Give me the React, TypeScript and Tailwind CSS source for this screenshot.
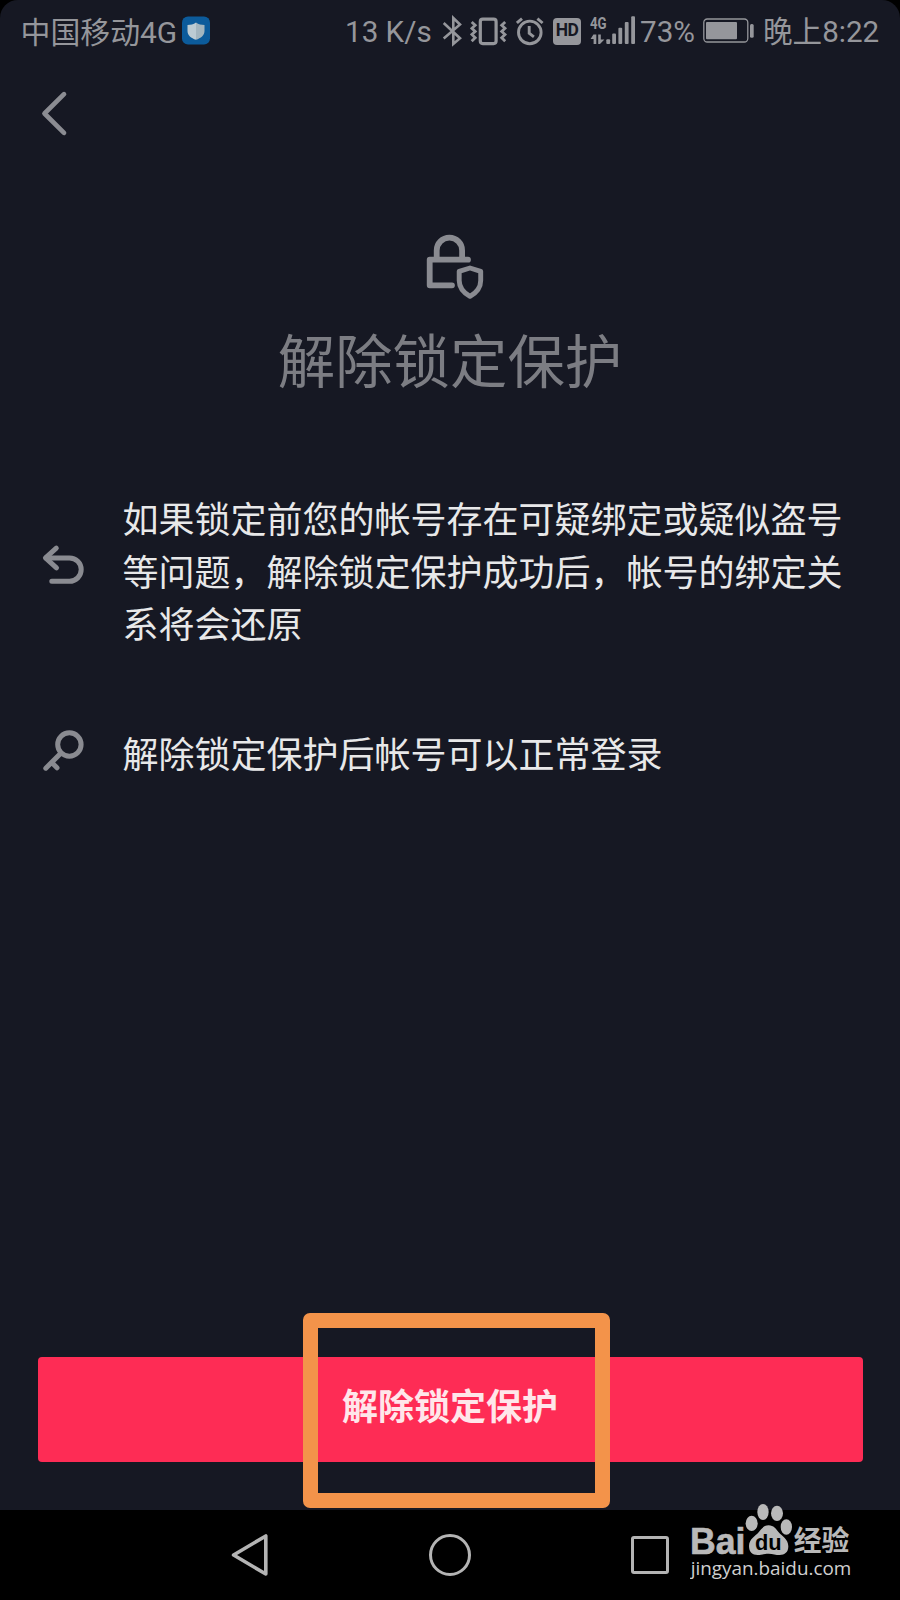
import React from 'react';

const tips = [
  {
    icon: UndoIcon,
    text: '如果锁定前您的帐号存在可疑绑定或疑似盗号等问题，解除锁定保护成功后，帐号的绑定关系将会还原',
  },
  { icon: KeyIcon, text: '解除锁定保护后帐号可以正常登录' },
];

function BackIcon() {
  return (
    <svg width="30" height="48" viewBox="0 0 30 48" fill="none" stroke="#8b8c92" strokeWidth="4.7" strokeLinecap="round" strokeLinejoin="round">
      <path d="M24 4.2 4.5 23.5 24 42.8" />
    </svg>
  );
}

function LockIcon() {
  return (
    <svg width="62" height="70" viewBox="0 0 62 70" fill="none" stroke="#8a8b91" strokeWidth="5.8" strokeLinecap="round" strokeLinejoin="round">
      <path d="M12.7 26V18.4a12.7 12.7 0 0 1 25.4 0V26" />
      <path d="M44 27.7H5.7v25.6H28" />
      <path strokeWidth="4.9" d="M46 36 56.7 39.3V48.5C56.7 56.5 52 61 46 64.4 40 61 35.2 56.5 35.2 48.5V39.3Z" />
    </svg>
  );
}

function UndoIcon() {
  return (
    <svg className="shrink-0 -translate-y-[9px]" width="50" height="46" viewBox="0 0 50 46" fill="none" stroke="#8a8b91" strokeWidth="5" strokeLinecap="round" strokeLinejoin="round">
      <path d="M16.3 6.2 5.5 15.9l11 10" />
      <path d="M6 15.9h23.5a11.7 11.7 0 0 1 0 23.4H11.8" />
    </svg>
  );
}

function KeyIcon() {
  return (
    <svg className="shrink-0 -translate-y-[6px]" width="50" height="46" viewBox="0 0 50 46" fill="none" stroke="#8a8b91" strokeWidth="5" strokeLinecap="round">
      <circle cx="29.4" cy="17.5" r="11.7" />
      <path d="M20.8 26.3 5.8 41.2M12 35.8l5 5" />
    </svg>
  );
}

function StatusBar() {
  return (
    <div className="flex h-[62px] shrink-0 items-center pl-[20.5px] text-[29.6px] leading-none whitespace-nowrap text-[#95969b]">
      <span className="w-[161.5px] shrink-0 pt-[3px] text-[29.9px]">中国移动4G</span>
      <svg className="shrink-0" width="28" height="32" viewBox="0 0 28 32">
        <rect y="1.5" width="28" height="28" rx="6" fill="#0c5b9b" />
        <path d="M14 7.5c2.6 1.8 5.3 2.4 8.5 2.6v5.8c0 4.4-3.6 7.2-8.5 8.8Z" fill="#a3b5bf" />
        <path d="M14 7.5c-2.6 1.8-5.3 2.4-8.5 2.6v5.8c0 4.4 3.6 7.2 8.5 8.8Z" fill="#bccbd3" />
      </svg>
      <span className="ml-[135px] w-[97px] shrink-0 pt-[3px]">13 K/s</span>
      {/* bluetooth */}
      <svg className="shrink-0" width="22" height="32" viewBox="0 0 22 32" fill="none" stroke="currentColor" strokeWidth="2.6">
        <path d="M1.7 8 18 23.3 11.3 29V3L18 9.5 1.7 23.5" />
      </svg>
      {/* vibrate */}
      <svg className="ml-[6px] shrink-0" width="38" height="32" viewBox="0 0 38 32" fill="none" stroke="currentColor">
        <rect x="10.3" y="4.2" width="15.8" height="24.4" rx="2.5" strokeWidth="3.2" />
        <path strokeWidth="2.8" d="m1.7 7 3.5 3.3-3.3 3 3.3 3.2-3.3 3 3.3 3.2-3.5 3.5M35.2 7l-3.5 3.3 3.3 3-3.3 3.2 3.3 3-3.3 3.2 3.5 3.5" />
      </svg>
      {/* alarm */}
      <svg className="ml-[8px] shrink-0" width="28" height="32" viewBox="0 0 28 32" fill="none" stroke="currentColor" strokeWidth="2.9">
        <circle cx="13.8" cy="17.4" r="11.3" />
        <path d="M13.2 11v7.2l4.7 3.6M.9 8 6 3.6M26.6 8l-5.2-4.4" />
      </svg>
      <span className="ml-[9px] flex h-[27px] w-[28px] shrink-0 items-center justify-center rounded-[4px] bg-[#95969b] text-[17.5px] font-bold tracking-[-0.5px] text-[#161823]">HD</span>
      <div className="ml-[9px] flex h-[32px] w-[46px] shrink-0">
        <div className="flex w-[16px] flex-col">
          <span className="h-[19px] w-[20px] origin-left scale-x-[0.78] text-[17px] leading-[17px] font-bold">4G</span>
          <svg className="shrink-0" width="15" height="11" viewBox="0 0 15 11" fill="currentColor">
            <path d="M3.4.5h2.9V10H3.6V5H.6ZM8.2.5h2.6v5h3.6L10 10H8.2Z" />
          </svg>
        </div>
        <svg className="shrink-0" width="30" height="32" viewBox="0 0 30 32" fill="currentColor">
          <rect x="0.3" y="24.2" width="3.8" height="4.7" rx="1" />
          <rect x="6.2" y="18.5" width="3.8" height="10.4" rx="1" />
          <rect x="12.4" y="12.7" width="3.8" height="16.2" rx="1" />
          <rect x="18.8" y="7" width="3.8" height="21.9" rx="1" />
          <rect x="25.2" y="1.3" width="3.8" height="27.6" rx="1" />
        </svg>
      </div>
      <span className="ml-[4px] w-[63px] shrink-0 pt-[3px]">73%</span>
      <svg className="shrink-0" width="52" height="32" viewBox="0 0 52 32">
        <rect x="0.8" y="4" width="44" height="23" rx="3.5" fill="none" stroke="currentColor" strokeWidth="1.3" />
        <rect x="3" y="7" width="31" height="17.2" rx="1" fill="currentColor" />
        <rect x="47" y="9" width="3.7" height="13.7" rx="1.5" fill="currentColor" />
      </svg>
      <span className="ml-[8px] shrink-0 pt-[3px]">晚上8:22</span>
    </div>
  );
}

function NavBar() {
  return (
    <div className="flex h-[90px] shrink-0 items-center justify-between bg-black pr-[231px] pl-[230px]">
      <svg width="38" height="46" viewBox="0 0 38 46" fill="none" stroke="#b4b4b4" strokeWidth="3.6" strokeLinejoin="round">
        <path d="M35.8 4v38L3.6 23Z" />
      </svg>
      <div className="size-[42px] rounded-full border-[3.5px] border-[#b4b4b4]" />
      <div className="size-[38px] rounded-[3px] border-[3.5px] border-[#b4b4b4]" />
    </div>
  );
}

function Watermark() {
  return (
    <svg className="absolute bottom-[10px] left-[690px]" width="165" height="90" viewBox="90 60 495 270" fill="#b9b9b9">
      <text x="90" y="221" textLength="166" lengthAdjust="spacingAndGlyphs" fontSize="110" fontWeight="700" stroke="#b9b9b9" strokeWidth="2" fontFamily="Liberation Sans, sans-serif">Bai</text>
      <ellipse cx="275" cy="130" rx="18" ry="23" />
      <ellipse cx="309" cy="96" rx="17" ry="24" />
      <ellipse cx="351" cy="100" rx="18" ry="23" />
      <ellipse cx="379" cy="141" rx="17" ry="23" />
      <path d="M326 136c15 0 22 11 30 21 10 12 29 20 29 42 0 18-11 26-26 26-12 0-20-4-33-4s-21 4-33 4c-16 0-26-9-26-27 0-21 19-29 29-41 8-10 15-21 30-21Z" />
      <text x="285" y="210" textLength="80" lengthAdjust="spacingAndGlyphs" fontSize="66" fontWeight="700" fill="#000" fontFamily="Liberation Sans, sans-serif">du</text>
      <text x="401" y="213" textLength="167" lengthAdjust="spacingAndGlyphs" fontSize="84" fontWeight="700" fontFamily="Noto Sans CJK SC, sans-serif">经验</text>
      <text x="92" y="284" textLength="482" lengthAdjust="spacingAndGlyphs" fontSize="56" fill="#d0d0d0" fontFamily="Open Sans, sans-serif">jingyan.baidu.com</text>
    </svg>
  );
}

export default function App() {
  return (
    <div className="relative flex h-[1600px] w-[900px] flex-col overflow-hidden bg-black font-['Roboto','Noto_Sans_CJK_SC',sans-serif]">
      <div className="flex flex-1 flex-col rounded-t-[18px] bg-[#161823]">
        <StatusBar />
        <div className="flex h-[104px] pt-[28px] pl-[40px]">
          <BackIcon />
        </div>

        <div className="mt-[66px] flex flex-col items-center pl-[9px]">
          <LockIcon />
        </div>
        <h1 className="mt-[21.5px] text-center text-[57.4px] leading-[80px] text-[#7c7d83]">解除锁定保护</h1>

        <div className="mt-[91.5px] flex flex-col gap-[77px] pl-[40px]">
          {tips.map(({ icon: Icon, text }) => (
            <div key={text} className="flex items-center gap-[32.5px]">
              <Icon />
              <p className="w-[724px] text-[36px] leading-[52.5px] text-[#e8e8e9]">{text}</p>
            </div>
          ))}
        </div>

        <button className="relative mx-[37.5px] mt-auto mb-[48px] h-[105px] rounded-[4px] bg-[#fe2c55] pb-[4px] text-[36px] font-bold text-[#ffe6ea]">
          解除锁定保护
          <span className="absolute top-[-44.5px] left-[265.5px] h-[195px] w-[306.5px] rounded-[7px] border-[15px] border-[#f3934a]" />
        </button>
      </div>
      <NavBar />
      <Watermark />
    </div>
  );
}
